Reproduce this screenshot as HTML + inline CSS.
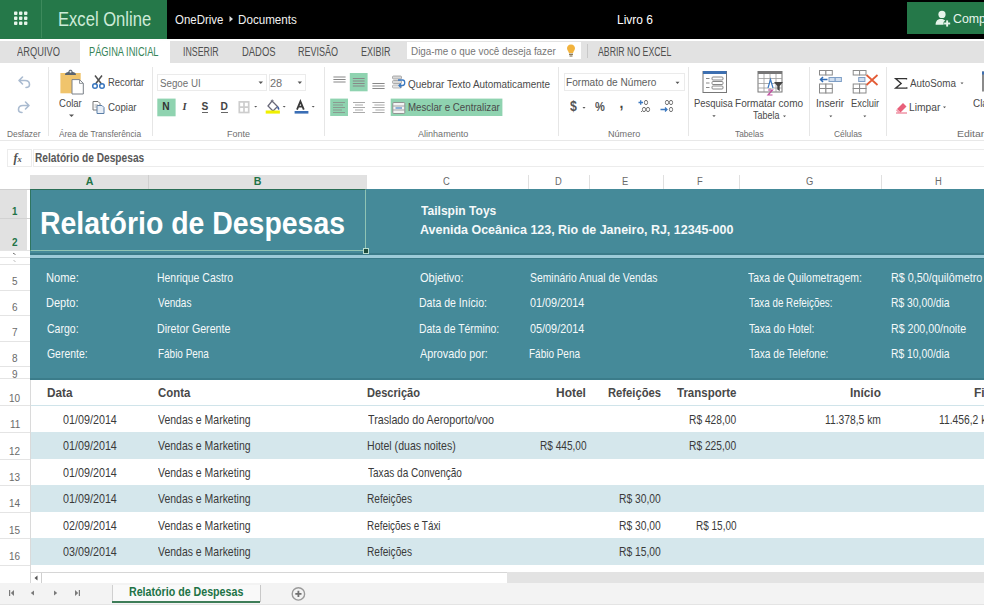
<!DOCTYPE html>
<html><head><meta charset="utf-8">
<style>
*{margin:0;padding:0;box-sizing:border-box}
html,body{width:984px;height:613px;overflow:hidden;background:#fff;font-family:"Liberation Sans",sans-serif;color:#333;position:relative}
.a{position:absolute}
.t{position:absolute;white-space:nowrap;line-height:normal;transform-origin:0 0}
svg{position:absolute;overflow:visible}
</style></head><body>
<!-- top bar -->
<div class="a" style="left:0;top:0;width:984px;height:38.5px;background:#000"></div>
<div class="a" style="left:0;top:0;width:167px;height:38.5px;background:#257849"></div>
<div class="a" style="left:41px;top:0;width:1px;height:38px;background:#3d8a5c"></div>
<div class="a" style="left:907px;top:2px;width:77px;height:32px;background:#257849"></div>
<!-- waffle -->
<svg style="left:0;top:0" width="42" height="38">
  <g fill="#e6f4ea">
   <rect x="14" y="11.5" width="3.4" height="3.4" rx="0.9"/><rect x="19" y="11.5" width="3.4" height="3.4" rx="0.9"/><rect x="24" y="11.5" width="3.4" height="3.4" rx="0.9"/>
   <rect x="14" y="16.5" width="3.4" height="3.4" rx="0.9"/><rect x="19" y="16.5" width="3.4" height="3.4" rx="0.9"/><rect x="24" y="16.5" width="3.4" height="3.4" rx="0.9"/>
   <rect x="14" y="21.5" width="3.4" height="3.4" rx="0.9"/><rect x="19" y="21.5" width="3.4" height="3.4" rx="0.9"/><rect x="24" y="21.5" width="3.4" height="3.4" rx="0.9"/>
  </g>
</svg>
<svg style="left:228px;top:15px" width="6" height="8"><path d="M1.5 1 L5 4 L1.5 7Z" fill="#ddd"/></svg>
<!-- share icon -->
<svg style="left:930px;top:6px" width="24" height="24">
  <g fill="#e6f4ea"><circle cx="12" cy="8.4" r="3.6"/><path d="M5.6 18.8 C5.6 14.6 8 12.9 11 12.9 C13 12.9 14.3 13.5 15.2 14.4 L13.6 16 L13.6 18.8Z"/>
  <rect x="16.2" y="14.4" width="1.9" height="6.2"/><rect x="14.1" y="16.55" width="6.1" height="1.9"/></g>
</svg>
<!-- tabs -->
<div class="a" style="left:0;top:41px;width:984px;height:22.3px;background:#e2e2e2"></div>
<div class="a" style="left:80px;top:41px;width:89.5px;height:23px;background:#fff"></div>
<div class="a" style="left:407px;top:42px;width:174px;height:17px;background:#fff"></div>
<div class="a" style="left:587px;top:44px;width:1px;height:14px;background:#c8c8c8"></div>
<svg style="left:564px;top:42px" width="14" height="18">
  <path d="M7 2.5 C4.3 2.5 3 4.4 3 6.3 C3 8.2 4.6 9.2 4.9 11 L9.1 11 C9.4 9.2 11 8.2 11 6.3 C11 4.4 9.7 2.5 7 2.5Z" fill="#f2b33d"/>
  <rect x="5" y="11.6" width="4" height="1.4" fill="#8a7a5a"/><rect x="5.5" y="13.4" width="3" height="1.2" fill="#8a7a5a"/>
</svg>
<!-- ribbon separators -->
<div class="a" style="left:48px;top:67px;width:1px;height:69px;background:#e6e6e6"></div>
<div class="a" style="left:152px;top:67px;width:1px;height:69px;background:#e6e6e6"></div>
<div class="a" style="left:324px;top:67px;width:1px;height:69px;background:#e6e6e6"></div>
<div class="a" style="left:558px;top:67px;width:1px;height:69px;background:#e6e6e6"></div>
<div class="a" style="left:688px;top:67px;width:1px;height:69px;background:#e6e6e6"></div>
<div class="a" style="left:809px;top:67px;width:1px;height:69px;background:#e6e6e6"></div>
<div class="a" style="left:886px;top:67px;width:1px;height:69px;background:#e6e6e6"></div>
<div class="a" style="left:0;top:140px;width:984px;height:1px;background:#e8e8e8"></div>
<!-- ribbon icons -->
<!-- undo/redo -->
<svg style="left:0;top:62px" width="48" height="60">
  <g fill="none" stroke="#aabbd0" stroke-width="1.6" stroke-linecap="round" stroke-linejoin="round">
    <path d="M19 18.5 L22.5 15 M19 18.5 L22.5 22 M19.5 18.5 H25 C28 18.5 29.5 20.5 29.5 22.5 C29.5 24.5 28 25.5 26 25.5"/>
    <path d="M29 43.5 L25.5 40 M29 43.5 L25.5 47 M28.5 43.5 H23 C20 43.5 18.5 45.5 18.5 47.5 C18.5 49.5 20 50.5 22 50.5"/>
  </g>
</svg>
<!-- clipboard -->
<svg style="left:55px;top:66px" width="35" height="55">
  <rect x="5.4" y="7" width="20.3" height="20.3" fill="#f0c46c"/>
  <path d="M10 9 C10 6.8 11.8 6 13.3 6 C13.6 4.4 14.6 3.8 15.5 3.8 C16.4 3.8 17.4 4.4 17.7 6 C19.2 6 21 6.8 21 9 Z" fill="#5a6470"/><circle cx="15.5" cy="5.8" r="1" fill="#f0f0f0"/>
  <path d="M17 13.6 H24.5 L28.3 17.4 V28 H17 Z" fill="#fff" stroke="#7a8088" stroke-width="1"/>
  <path d="M24.5 13.6 V17.4 H28.3" fill="none" stroke="#7a8088" stroke-width="0.8"/>
  <path d="M14 48.5 L16.5 51 L19 48.5Z" fill="#555"/>
</svg>
<!-- scissors -->
<svg style="left:90px;top:74px" width="18" height="16">
  <g fill="none" stroke-width="1.5">
   <path d="M5 1.5 L11.5 10 M12 1.5 L5.5 10" stroke="#505050"/>
   <circle cx="5" cy="12" r="2.3" stroke="#3b78c0"/><circle cx="12" cy="12" r="2.3" stroke="#3b78c0"/>
  </g>
</svg>
<!-- copy -->
<svg style="left:90px;top:99px" width="18" height="16">
  <path d="M3 2.5 H8 L10 4.5 V11 H3Z" fill="#fff" stroke="#777" stroke-width="1"/>
  <path d="M7 6.5 H12 L14 8.5 V14.5 H7Z" fill="#e8eef6" stroke="#5b7fa8" stroke-width="1"/>
  <path d="M4.5 6 H8 M4.5 8 H7" stroke="#999" stroke-width="0.8"/>
</svg>
<!-- font boxes -->
<div class="a" style="left:157px;top:74px;width:110px;height:17px;border:1px solid #ebebeb"></div>
<div class="a" style="left:269px;top:74px;width:37px;height:17px;border:1px solid #ebebeb"></div>
<svg style="left:150px;top:62px" width="180" height="60">
  <g fill="#555">
   <path d="M108.5 19.5 L113 19.5 L110.75 22Z"/>
   <path d="M147.6 19.5 L152 19.5 L149.8 22Z"/>
  </g>
  <rect x="7.3" y="36.6" width="18.3" height="17.7" fill="#8fd3b0"/>
</svg>
<div class="t" style="left:162.2px;top:101.3px;font-size:10.2px;font-weight:bold;color:#333">N</div>
<div class="t" style="left:182.5px;top:101.3px;font-size:10.5px;font-style:italic;font-weight:bold;font-family:'Liberation Serif',serif;color:#444">I</div>
<div class="t" style="left:201.4px;top:101.3px;font-size:10.2px;font-weight:bold;color:#444">S</div>
<div class="a" style="left:201.5px;top:111.8px;width:6.5px;height:1.1px;background:#666"></div>
<div class="t" style="left:220.5px;top:101.3px;font-size:10.2px;font-weight:bold;color:#444">D</div>
<div class="a" style="left:220.8px;top:111.6px;width:7px;height:1.6px;background:#666"></div>
<svg style="left:236px;top:98px" width="90" height="22">
  <g fill="none" stroke="#cdcdcd" stroke-width="1.7">
   <rect x="3.3" y="3.9" width="9.4" height="10.6"/><path d="M8 3.9 V14.5 M3.3 9.2 H12.7"/>
  </g>
  <g fill="#555"><path d="M18.2 8 L21.2 8 L19.7 9.6Z"/><path d="M46.7 8 L49.7 8 L48.2 9.6Z"/><path d="M75.7 8 L78.7 8 L77.2 9.6Z"/></g>
  <path d="M36 3 L41.5 8.5 L37 13 L32 8Z" fill="#fff" stroke="#6a6a7a" stroke-width="1.3"/>
  <path d="M35 2.8 C35.5 1.8 37 1.8 37.5 3" fill="none" stroke="#6a6a7a" stroke-width="1"/>
  <path d="M41.5 8 C43.3 9 43.8 11 43 12 C41.6 11.8 41 10 41.5 8Z" fill="#3a5aa0"/>
  <rect x="29.7" y="12.5" width="14.2" height="3.1" fill="#f0f000"/>
  <path d="M61 11.7 L64.4 3.3 L67.8 11.7 M62.3 8.6 H66.5" fill="none" stroke="#3a3a3a" stroke-width="1.8"/>
  <rect x="58.6" y="13" width="13.8" height="2.6" fill="#3a6eb5"/>
</svg>
<!-- alignment -->
<svg style="left:324px;top:62px" width="240" height="60">
  <rect x="25.8" y="11" width="17.8" height="18.3" fill="#8fd3b0"/>
  <rect x="6.2" y="36.6" width="17.8" height="17.4" fill="#8fd3b0"/>
  <rect x="66.7" y="36.6" width="111.7" height="17.4" fill="#8fd3b0"/>
  <g stroke="#888" stroke-width="1.1">
    <path d="M9.4 15 H21.6 M9.4 17.5 H21.6 M9.4 20 H21.6"/>
    <path d="M28.8 16.5 H40.6 M28.8 19 H40.6 M28.8 21.5 H40.6 M28.8 24 H40.6"/>
    <path d="M48.4 21.5 H60.6 M48.4 24 H60.6 M48.4 26.5 H60.6"/>
    <path d="M9 40.5 H21 M9 43 H19 M9 45.5 H21 M9 48 H18 M9 50.5 H21" stroke="#8a9a90"/>
    <path d="M29 40.5 H41 M31 43 H39 M29 45.5 H41 M31 48 H39 M29 50.5 H41" stroke="#aaa"/>
    <path d="M48.4 40.5 H60.6 M50.4 43 H60.6 M48.4 45.5 H60.6 M51.4 48 H60.6 M48.4 50.5 H60.6" stroke="#aaa"/>
  </g>
  <g>
    <rect x="68.5" y="14" width="9" height="3" rx="1" fill="#d8d8d8" stroke="#9a9a9a" stroke-width="0.8"/>
    <rect x="68.5" y="18.5" width="9" height="3" rx="1" fill="#d8d8d8" stroke="#9a9a9a" stroke-width="0.8"/>
    <rect x="68.5" y="23" width="9" height="3" rx="1" fill="#e4e4e4" stroke="#a8a8a8" stroke-width="0.8"/>
    <path d="M74 18 H78.5 C81.5 18 81.5 23.5 78.5 23.5 H75" fill="none" stroke="#3b78c0" stroke-width="1.3"/>
    <path d="M77 21.5 L75 23.5 L77 25.5" fill="none" stroke="#3b78c0" stroke-width="1.3"/>
    <rect x="68.8" y="40.5" width="12" height="11" rx="1" fill="#f4f4f4" stroke="#8a8a8a" stroke-width="0.9"/>
    <path d="M68.8 44 H80.8 M68.8 48 H80.8" stroke="#9a9a9a" stroke-width="0.9"/>
    <path d="M71.5 46 H78" stroke="#3b78c0" stroke-width="1.1"/>
  </g>
</svg>
<!-- number -->
<div class="a" style="left:564px;top:73px;width:121px;height:18px;border:1px solid #ebebeb"></div>
<svg style="left:558px;top:62px" width="130" height="60">
  <path d="M117.5 19.8 L121.5 19.8 L119.5 22Z" fill="#555"/>
  <path d="M24.5 45 L27.5 45 L26 46.8Z" fill="#555"/>
</svg>
<div class="t" style="left:570px;top:98px;font-size:14.5px;font-weight:bold;color:#555;transform:scaleX(0.85)">$</div>
<div class="t" style="left:595px;top:99px;font-size:13px;font-weight:bold;color:#555;transform:scaleX(0.85)">%</div>
<div class="t" style="left:619.5px;top:95px;font-size:14px;font-weight:bold;color:#444">,</div>
<svg style="left:636px;top:98px" width="40" height="18">
  <g fill="none" stroke="#666" stroke-width="0.9">
   <ellipse cx="10" cy="4.5" rx="1.6" ry="2.2"/><ellipse cx="8" cy="11.5" rx="1.6" ry="2.2"/><ellipse cx="12" cy="11.5" rx="1.6" ry="2.2"/>
   <path d="M5 13.5 L6 13.5"/>
   <ellipse cx="31" cy="4.5" rx="1.6" ry="2.2"/><ellipse cx="35" cy="4.5" rx="1.6" ry="2.2"/><ellipse cx="35" cy="11.5" rx="1.6" ry="2.2"/>
  </g>
  <path d="M2.5 4.5 H7 M4.7 2.3 V6.7" stroke="#3b78c0" stroke-width="1.3"/>
  <path d="M24.5 11.5 H31 M29 9.5 L31 11.5 L29 13.5" fill="none" stroke="#3b78c0" stroke-width="1.3"/>
</svg>
<!-- tables -->
<svg style="left:700px;top:68px" width="90" height="30">
  <rect x="3" y="3.5" width="23.5" height="21" fill="#fff" stroke="#777" stroke-width="1"/>
  <rect x="3" y="3" width="23.5" height="3" fill="#3d6fb0"/>
  <g stroke="#888" stroke-width="1" fill="none">
    <path d="M6 10.5 H9.5 M6 15 H9.5 M6 19.5 H9.5"/>
    <rect x="12" y="9" width="11" height="3" rx="1"/><rect x="12" y="13.5" width="11" height="3" rx="1"/><rect x="12" y="18" width="11" height="3" rx="1"/>
  </g>
  <rect x="58" y="3.5" width="24" height="20.5" fill="#fff" stroke="#777" stroke-width="1"/>
  <rect x="58" y="3" width="24" height="3" fill="#777"/>
  <g stroke="#999" stroke-width="0.8" fill="none">
    <path d="M58 10.5 H82 M58 15.5 H82 M58 20 H82 M64 6 V24 M70 6 V24 M76 6 V24"/>
  </g>
  <path d="M68 20 L70.5 11.5 L73 20" fill="#fff" stroke="#3b78c0" stroke-width="1.2"/>
  <path d="M68 22 H72.5 L68 27 H72.5" fill="none" stroke="#c050a0" stroke-width="1.2"/>
  <path d="M74 14 H83 L79.7 18 V23 L77.3 21.5 V18Z" fill="#444"/>
</svg>
<svg style="left:690px;top:62px" width="120" height="60">
  <g fill="#555"><path d="M22.3 53.2 L25.7 53.2 L24 55Z"/><path d="M93 53.5 L96 53.5 L94.5 55.3Z"/></g>
</svg>
<!-- cells -->
<svg style="left:805px;top:62px" width="80" height="60">
  <g fill="#fff" stroke="#8a8a8a" stroke-width="1">
   <rect x="14.5" y="8.5" width="6.4" height="4.5"/><rect x="20.9" y="8.5" width="6.4" height="4.5"/>
   <rect x="14.5" y="22" width="6.4" height="4.5"/><rect x="20.9" y="22" width="6.4" height="4.5"/>
   <rect x="14.5" y="26.5" width="6.4" height="4.5"/><rect x="20.9" y="26.5" width="6.4" height="4.5"/>
   <rect x="48.2" y="8.5" width="6.4" height="4.5"/><rect x="54.6" y="8.5" width="6.4" height="4.5"/>
   <rect x="48.2" y="22" width="6.4" height="4.5"/><rect x="54.6" y="22" width="6.4" height="4.5"/>
   <rect x="48.2" y="26.5" width="6.4" height="4.5"/><rect x="54.6" y="26.5" width="6.4" height="4.5"/>
  </g>
  <g fill="#d0deef" stroke="#7f9fc6" stroke-width="1">
   <rect x="24" y="15.5" width="6.2" height="4"/><rect x="30.2" y="15.5" width="6.2" height="4"/>
   <rect x="53.7" y="15.5" width="6.2" height="4"/>
  </g>
  <path d="M15.5 17.5 H22.5 M18 15 L15.5 17.5 L18 20" fill="none" stroke="#2f6bb5" stroke-width="1.5"/>
  <path d="M61.5 13 L72.5 23 M72.5 13 L61.5 23" stroke="#e35b35" stroke-width="1.7"/>
  <g fill="#555"><path d="M24.3 53.5 L27.3 53.5 L25.8 55.3Z"/><path d="M58.3 53.5 L61.3 53.5 L59.8 55.3Z"/></g>
</svg>
<!-- editing -->
<svg style="left:886px;top:62px" width="100" height="60">
  <path d="M20.5 17.5 V16.6 H9.6 L15.2 21.5 L9.6 26.2 H20.8 V25.2" fill="none" stroke="#333" stroke-width="1.3"/>
  <path d="M74.5 20.5 L77.5 20.5 L76 22.3Z" fill="#555"/>
  <path d="M57 44.5 L60 44.5 L58.5 46.3Z" fill="#555"/>
  <path d="M11 47 L17 41 L20.5 44.5 L14.5 50.5 Z" fill="#e8607a"/>
  <path d="M11 47 L14.5 50.5 L12 50.5 L10 48.5Z" fill="#f4a0b0"/>
  <path d="M10 51 H21" stroke="#e8607a" stroke-width="1"/>
  <rect x="96" y="9.5" width="2.5" height="20" fill="#8a8a8a"/><rect x="96" y="9.5" width="3" height="3" fill="#3d6fb0"/>
</svg>

<!-- formula bar -->
<div class="a" style="left:7px;top:149px;width:25px;height:18px;border:1px solid #ececec;background:#fff"></div>
<div class="a" style="left:33px;top:149px;width:951px;height:18px;border:1px solid #ececec;border-right:none;background:#fff"></div>
<div class="t" style="left:13.5px;top:151px;font-family:'Liberation Serif',serif;font-style:italic;font-weight:bold;font-size:12px;color:#505050">f<span style="font-size:8.5px">x</span></div>
<!-- column headers -->
<div class="a" style="left:30px;top:175px;width:336px;height:14px;background:#e1e1e1"></div>
<div class="a" style="left:148px;top:175px;width:1px;height:14px;background:#cfcfcf"></div>
<div class="a" style="left:366px;top:175px;width:1px;height:14px;background:#e0e0e0"></div>
<div class="a" style="left:528px;top:175px;width:1px;height:14px;background:#e0e0e0"></div>
<div class="a" style="left:589px;top:175px;width:1px;height:14px;background:#e0e0e0"></div>
<div class="a" style="left:663px;top:175px;width:1px;height:14px;background:#e0e0e0"></div>
<div class="a" style="left:739px;top:175px;width:1px;height:14px;background:#e0e0e0"></div>
<div class="a" style="left:881px;top:175px;width:1px;height:14px;background:#e0e0e0"></div>
<!-- row header column -->
<div class="a" style="left:0;top:189px;width:27px;height:61px;background:#e1e1e1"></div>
<div class="a" style="left:30px;top:189px;width:1px;height:394px;background:#dadada"></div>
<!-- teal blocks -->
<div class="a" style="left:30px;top:189px;width:954px;height:61px;background:#458a99"></div>
<div class="a" style="left:30px;top:250px;width:954px;height:4px;background:#458a99"></div>
<div class="a" style="left:30px;top:253px;width:954px;height:1.5px;background:#3a7b89"></div>
<div class="a" style="left:30px;top:254.5px;width:954px;height:3px;background:#9ccbd8"></div>
<div class="a" style="left:30px;top:257.5px;width:954px;height:121.5px;background:#458a99"></div>
<div class="a" style="left:30px;top:257.5px;width:954px;height:1.5px;background:#3a7b89"></div>
<div class="a" style="left:30px;top:378px;width:954px;height:1.5px;background:#3b7c8a"></div>
<!-- selection -->
<div class="a" style="left:30px;top:189px;width:336px;height:62px;border:1.2px solid #8fc4b4;border-top:1.5px solid #2b6e57;border-left:1.3px solid #2f7560"></div>
<div class="a" style="left:362.5px;top:247.5px;width:6px;height:6px;background:#1f4d3c;border:1px solid #b8ddd0"></div>
<!-- table header line -->
<div class="a" style="left:31px;top:405px;width:953px;height:1px;background:#d0e4ea"></div>
<!-- bands -->
<div class="a" style="left:31px;top:432px;width:953px;height:27px;background:#d5e7ec"></div>
<div class="a" style="left:31px;top:485px;width:953px;height:27px;background:#d5e7ec"></div>
<div class="a" style="left:31px;top:538px;width:953px;height:27px;background:#d5e7ec"></div>
<!-- row header lines -->
<div class="a" style="left:0;top:218.0px;width:30px;height:1px;background:#d2d2d2"></div>
<div class="a" style="left:0;top:250.0px;width:30px;height:1px;background:#e4e4e4"></div>
<div class="a" style="left:0;top:257.0px;width:30px;height:1px;background:#e4e4e4"></div>
<div class="a" style="left:0;top:264.0px;width:30px;height:1px;background:#e4e4e4"></div>
<div class="a" style="left:0;top:289.5px;width:30px;height:1px;background:#e4e4e4"></div>
<div class="a" style="left:0;top:315.0px;width:30px;height:1px;background:#e4e4e4"></div>
<div class="a" style="left:0;top:340.5px;width:30px;height:1px;background:#e4e4e4"></div>
<div class="a" style="left:0;top:366.0px;width:30px;height:1px;background:#e4e4e4"></div>
<div class="a" style="left:0;top:378.0px;width:30px;height:1px;background:#e4e4e4"></div>
<div class="a" style="left:0;top:405.0px;width:30px;height:1px;background:#e4e4e4"></div>
<div class="a" style="left:0;top:432.0px;width:30px;height:1px;background:#e4e4e4"></div>
<div class="a" style="left:0;top:459.0px;width:30px;height:1px;background:#e4e4e4"></div>
<div class="a" style="left:0;top:485.0px;width:30px;height:1px;background:#e4e4e4"></div>
<div class="a" style="left:0;top:512.0px;width:30px;height:1px;background:#e4e4e4"></div>
<div class="a" style="left:0;top:538.0px;width:30px;height:1px;background:#e4e4e4"></div>
<div class="a" style="left:0;top:565.0px;width:30px;height:1px;background:#e4e4e4"></div>
<div class="a" style="left:0;top:189px;width:30px;height:1px;background:#cfcfcf"></div>
<svg style="left:0;top:250px" width="30" height="15"><path d="M13 3.2 L15.5 4.5 M14 10.5 L15 11.5" stroke="#777" stroke-width="1"/></svg>
<!-- scrollbar -->
<div class="a" style="left:30px;top:572px;width:954px;height:11px;background:#e3e3e3"></div>
<div class="a" style="left:30px;top:572px;width:477px;height:11px;background:#fff;border-top:1px solid #d6d6d6;border-left:1px solid #d6d6d6"></div>
<div class="a" style="left:41px;top:573px;width:1px;height:10px;background:#cfcfcf"></div>
<svg style="left:33px;top:574px" width="6" height="8"><path d="M4.5 1.5 L1.5 4 L4.5 6.5Z" fill="#555"/></svg>
<!-- bottom sheet bar -->
<div class="a" style="left:0;top:583px;width:984px;height:22px;background:#f3f3f3;border-bottom:1px solid #e4e4e4"></div>
<div class="a" style="left:112px;top:585px;width:149px;height:17px;background:#f9f9f9;border-left:1px solid #d0d0d0;border-right:1.5px solid #c8c8c8"></div>
<div class="a" style="left:112px;top:600.5px;width:148px;height:2.2px;background:#3e7d58"></div>
<svg style="left:0;top:583px" width="320" height="21">
  <g fill="#7a7a7a">
   <rect x="9" y="7" width="1.2" height="6"/><path d="M14 7 L10.8 10 L14 13Z"/>
   <path d="M34 7.5 L30.8 10 L34 12.5Z"/>
   <path d="M54 7.5 L57.2 10 L54 12.5Z"/>
   <path d="M75 7 L78.2 10 L75 13Z"/><rect x="78.8" y="7" width="1.2" height="6"/>
  </g>
  <circle cx="298.4" cy="10.9" r="6.2" fill="none" stroke="#9a9a9a" stroke-width="1.4"/>
  <path d="M298.4 7.8 V14 M295.3 10.9 H301.5" stroke="#707070" stroke-width="1.8"/>
</svg>
<!--HEADERS-->
<div class="t" style="left:58.37px;top:8.44px;font-size:19.62px;font-weight:normal;color:#cdebd8;transform:scaleX(0.8463);">Excel Online</div>
<div class="t" style="left:175.04px;top:11.56px;font-size:13.08px;font-weight:normal;color:#f2f2f2;transform:scaleX(0.8755);">OneDrive</div>
<div class="t" style="left:237.67px;top:11.56px;font-size:13.08px;font-weight:normal;color:#f2f2f2;transform:scaleX(0.8899);">Documents</div>
<div class="t" style="left:616.94px;top:11.66px;font-size:13.08px;font-weight:normal;color:#ffffff;transform:scaleX(0.9140);">Livro 6</div>
<div class="t" style="left:953.38px;top:11.43px;font-size:13.23px;font-weight:normal;color:#e8f5ec;transform:scaleX(0.9348);">Compartilhar</div>
<div class="t" style="left:16.50px;top:44.81px;font-size:11.92px;font-weight:normal;color:#505050;transform:scaleX(0.7813);">ARQUIVO</div>
<div class="t" style="left:89.46px;top:44.81px;font-size:11.92px;font-weight:normal;color:#358457;transform:scaleX(0.7780);">PÁGINA INICIAL</div>
<div class="t" style="left:182.61px;top:44.81px;font-size:11.92px;font-weight:normal;color:#505050;transform:scaleX(0.7398);">INSERIR</div>
<div class="t" style="left:241.94px;top:44.81px;font-size:11.92px;font-weight:normal;color:#505050;transform:scaleX(0.7929);">DADOS</div>
<div class="t" style="left:298.28px;top:44.81px;font-size:11.92px;font-weight:normal;color:#505050;transform:scaleX(0.7578);">REVISÃO</div>
<div class="t" style="left:360.88px;top:44.81px;font-size:11.92px;font-weight:normal;color:#505050;transform:scaleX(0.7548);">EXIBIR</div>
<div class="t" style="left:410.81px;top:45.00px;font-size:11.05px;font-weight:normal;color:#767676;transform:scaleX(0.8933);">Diga-me o que você deseja fazer</div>
<div class="t" style="left:597.60px;top:44.81px;font-size:11.92px;font-weight:normal;color:#505050;transform:scaleX(0.7332);">ABRIR NO EXCEL</div>
<div class="t" style="left:7.13px;top:128.32px;font-size:9.59px;font-weight:normal;color:#6e6e6e;transform:scaleX(0.8721);">Desfazer</div>
<div class="t" style="left:59.00px;top:128.32px;font-size:9.59px;font-weight:normal;color:#6e6e6e;transform:scaleX(0.8711);">Área de Transferência</div>
<div class="t" style="left:226.98px;top:128.32px;font-size:9.59px;font-weight:normal;color:#6e6e6e;transform:scaleX(0.9395);">Fonte</div>
<div class="t" style="left:417.60px;top:128.32px;font-size:9.59px;font-weight:normal;color:#6e6e6e;transform:scaleX(0.9437);">Alinhamento</div>
<div class="t" style="left:607.97px;top:128.32px;font-size:9.59px;font-weight:normal;color:#6e6e6e;transform:scaleX(0.9483);">Número</div>
<div class="t" style="left:735.13px;top:128.32px;font-size:9.59px;font-weight:normal;color:#6e6e6e;transform:scaleX(0.8654);">Tabelas</div>
<div class="t" style="left:833.58px;top:128.32px;font-size:9.59px;font-weight:normal;color:#6e6e6e;transform:scaleX(0.8775);">Células</div>
<div class="t" style="left:956.96px;top:128.32px;font-size:9.59px;font-weight:normal;color:#6e6e6e;transform:scaleX(1.0882);">Editando</div>
<div class="t" style="left:58.62px;top:97.66px;font-size:10.32px;font-weight:normal;color:#4a4a4a;transform:scaleX(0.9246);">Colar</div>
<div class="t" style="left:107.95px;top:77.16px;font-size:10.32px;font-weight:normal;color:#4a4a4a;transform:scaleX(0.9142);">Recortar</div>
<div class="t" style="left:107.51px;top:101.66px;font-size:10.32px;font-weight:normal;color:#4a4a4a;transform:scaleX(0.9412);">Copiar</div>
<div class="t" style="left:159.61px;top:77.20px;font-size:11.05px;font-weight:normal;color:#707070;transform:scaleX(0.8825);">Segoe UI</div>
<div class="t" style="left:270.15px;top:77.20px;font-size:11.05px;font-weight:normal;color:#707070;transform:scaleX(0.9969);">28</div>
<div class="t" style="left:407.90px;top:77.66px;font-size:10.76px;font-weight:normal;color:#4a4a4a;transform:scaleX(0.9232);">Quebrar Texto Automaticamente</div>
<div class="t" style="left:407.52px;top:101.46px;font-size:10.76px;font-weight:normal;color:#4a4a4a;transform:scaleX(0.9044);">Mesclar e Centralizar</div>
<div class="t" style="left:565.99px;top:77.23px;font-size:10.47px;font-weight:normal;color:#606060;transform:scaleX(0.9651);">Formato de Número</div>
<div class="t" style="left:694.15px;top:98.23px;font-size:10.47px;font-weight:normal;color:#4a4a4a;transform:scaleX(0.9017);">Pesquisa</div>
<div class="t" style="left:735.20px;top:98.23px;font-size:10.47px;font-weight:normal;color:#4a4a4a;transform:scaleX(0.9608);">Formatar como</div>
<div class="t" style="left:752.62px;top:109.83px;font-size:10.47px;font-weight:normal;color:#4a4a4a;transform:scaleX(0.8543);">Tabela</div>
<div class="t" style="left:815.88px;top:98.03px;font-size:10.47px;font-weight:normal;color:#4a4a4a;transform:scaleX(0.9715);">Inserir</div>
<div class="t" style="left:850.65px;top:98.03px;font-size:10.47px;font-weight:normal;color:#4a4a4a;transform:scaleX(0.8972);">Excluir</div>
<div class="t" style="left:910.00px;top:77.73px;font-size:10.47px;font-weight:normal;color:#4a4a4a;transform:scaleX(0.9406);">AutoSoma</div>
<div class="t" style="left:909.18px;top:102.03px;font-size:10.47px;font-weight:normal;color:#4a4a4a;transform:scaleX(0.9834);">Limpar</div>
<div class="t" style="left:972.51px;top:98.03px;font-size:10.47px;font-weight:normal;color:#4a4a4a;transform:scaleX(0.9453);">Classificar</div>
<div class="t" style="left:34.99px;top:151.08px;font-size:12.06px;font-weight:bold;color:#585858;transform:scaleX(0.8452);">Relatório de Despesas</div>
<div class="t" style="left:40.39px;top:204.51px;font-size:31.69px;font-weight:bold;color:#ffffff;transform:scaleX(0.8975);">Relatório de Despesas</div>
<div class="t" style="left:420.58px;top:202.73px;font-size:13.66px;font-weight:bold;color:#f5f9fa;transform:scaleX(0.8836);">Tailspin Toys</div>
<div class="t" style="left:420.45px;top:221.63px;font-size:13.23px;font-weight:bold;color:#f5f9fa;transform:scaleX(0.9430);">Avenida Oceânica 123, Rio de Janeiro, RJ, 12345-000</div>
<div class="t" style="left:46.41px;top:271.01px;font-size:11.92px;font-weight:normal;color:#f5f9fa;transform:scaleX(0.9364);">Nome:</div>
<div class="t" style="left:157.46px;top:271.01px;font-size:11.92px;font-weight:normal;color:#f5f9fa;transform:scaleX(0.8782);">Henrique Castro</div>
<div class="t" style="left:419.86px;top:271.01px;font-size:11.92px;font-weight:normal;color:#f5f9fa;transform:scaleX(0.9272);">Objetivo:</div>
<div class="t" style="left:529.78px;top:271.01px;font-size:11.92px;font-weight:normal;color:#f5f9fa;transform:scaleX(0.8710);">Seminário Anual de Vendas</div>
<div class="t" style="left:748.49px;top:271.01px;font-size:11.92px;font-weight:normal;color:#f5f9fa;transform:scaleX(0.8774);">Taxa de Quilometragem:</div>
<div class="t" style="left:890.84px;top:271.01px;font-size:11.92px;font-weight:normal;color:#f5f9fa;transform:scaleX(0.9072);">R$ 0,50/quilômetro</div>
<div class="t" style="left:46.42px;top:296.41px;font-size:11.92px;font-weight:normal;color:#f5f9fa;transform:scaleX(0.9270);">Depto:</div>
<div class="t" style="left:158.30px;top:296.41px;font-size:11.92px;font-weight:normal;color:#f5f9fa;transform:scaleX(0.8425);">Vendas</div>
<div class="t" style="left:419.46px;top:296.41px;font-size:11.92px;font-weight:normal;color:#f5f9fa;transform:scaleX(0.8857);">Data de Início:</div>
<div class="t" style="left:529.87px;top:296.41px;font-size:11.92px;font-weight:normal;color:#f5f9fa;transform:scaleX(0.9104);">01/09/2014</div>
<div class="t" style="left:748.50px;top:296.41px;font-size:11.92px;font-weight:normal;color:#f5f9fa;transform:scaleX(0.8243);">Taxa de Refeições:</div>
<div class="t" style="left:890.87px;top:296.41px;font-size:11.92px;font-weight:normal;color:#f5f9fa;transform:scaleX(0.8668);">R$ 30,00/dia</div>
<div class="t" style="left:46.77px;top:321.81px;font-size:11.92px;font-weight:normal;color:#f5f9fa;transform:scaleX(0.8848);">Cargo:</div>
<div class="t" style="left:157.45px;top:321.81px;font-size:11.92px;font-weight:normal;color:#f5f9fa;transform:scaleX(0.8941);">Diretor Gerente</div>
<div class="t" style="left:419.47px;top:321.81px;font-size:11.92px;font-weight:normal;color:#f5f9fa;transform:scaleX(0.8737);">Data de Término:</div>
<div class="t" style="left:529.87px;top:321.81px;font-size:11.92px;font-weight:normal;color:#f5f9fa;transform:scaleX(0.9104);">05/09/2014</div>
<div class="t" style="left:748.50px;top:321.81px;font-size:11.92px;font-weight:normal;color:#f5f9fa;transform:scaleX(0.8597);">Taxa do Hotel:</div>
<div class="t" style="left:890.85px;top:321.81px;font-size:11.92px;font-weight:normal;color:#f5f9fa;transform:scaleX(0.8928);">R$ 200,00/noite</div>
<div class="t" style="left:46.78px;top:347.21px;font-size:11.92px;font-weight:normal;color:#f5f9fa;transform:scaleX(0.8763);">Gerente:</div>
<div class="t" style="left:157.50px;top:347.21px;font-size:11.92px;font-weight:normal;color:#f5f9fa;transform:scaleX(0.8359);">Fábio Pena</div>
<div class="t" style="left:420.30px;top:347.21px;font-size:11.92px;font-weight:normal;color:#f5f9fa;transform:scaleX(0.9062);">Aprovado por:</div>
<div class="t" style="left:529.40px;top:347.21px;font-size:11.92px;font-weight:normal;color:#f5f9fa;transform:scaleX(0.8376);">Fábio Pena</div>
<div class="t" style="left:748.50px;top:347.21px;font-size:11.92px;font-weight:normal;color:#f5f9fa;transform:scaleX(0.8530);">Taxa de Telefone:</div>
<div class="t" style="left:890.87px;top:347.21px;font-size:11.92px;font-weight:normal;color:#f5f9fa;transform:scaleX(0.8668);">R$ 10,00/dia</div>
<div class="t" style="left:46.99px;top:386.11px;font-size:11.92px;font-weight:bold;color:#484848;transform:scaleX(0.9888);">Data</div>
<div class="t" style="left:157.54px;top:386.11px;font-size:11.92px;font-weight:bold;color:#484848;transform:scaleX(0.9565);">Conta</div>
<div class="t" style="left:367.43px;top:386.11px;font-size:11.92px;font-weight:bold;color:#484848;transform:scaleX(0.9321);">Descrição</div>
<div class="t" style="left:556.48px;top:386.11px;font-size:11.92px;font-weight:bold;color:#484848;transform:scaleX(1.0045);">Hotel</div>
<div class="t" style="left:608.13px;top:386.11px;font-size:11.92px;font-weight:bold;color:#484848;transform:scaleX(0.9426);">Refeições</div>
<div class="t" style="left:676.89px;top:386.11px;font-size:11.92px;font-weight:bold;color:#484848;transform:scaleX(0.9646);">Transporte</div>
<div class="t" style="left:849.59px;top:386.11px;font-size:11.92px;font-weight:bold;color:#484848;transform:scaleX(0.9920);">Início</div>
<div class="t" style="left:973.58px;top:386.11px;font-size:11.92px;font-weight:bold;color:#484848;transform:scaleX(1.0117);">Fim</div>
<div class="t" style="left:62.68px;top:412.91px;font-size:11.92px;font-weight:normal;color:#3a3a3a;transform:scaleX(0.9037);">01/09/2014</div>
<div class="t" style="left:158.00px;top:412.91px;font-size:11.92px;font-weight:normal;color:#3a3a3a;transform:scaleX(0.8798);">Vendas e Marketing</div>
<div class="t" style="left:367.89px;top:412.91px;font-size:11.92px;font-weight:normal;color:#3a3a3a;transform:scaleX(0.8999);">Traslado do Aeroporto/voo</div>
<div class="t" style="left:689.18px;top:412.91px;font-size:11.92px;font-weight:normal;color:#3a3a3a;transform:scaleX(0.8579);">R$ 428,00</div>
<div class="t" style="left:62.68px;top:439.41px;font-size:11.92px;font-weight:normal;color:#3a3a3a;transform:scaleX(0.9037);">01/09/2014</div>
<div class="t" style="left:158.00px;top:439.41px;font-size:11.92px;font-weight:normal;color:#3a3a3a;transform:scaleX(0.8798);">Vendas e Marketing</div>
<div class="t" style="left:367.25px;top:439.41px;font-size:11.92px;font-weight:normal;color:#3a3a3a;transform:scaleX(0.8878);">Hotel (duas noites)</div>
<div class="t" style="left:540.19px;top:439.41px;font-size:11.92px;font-weight:normal;color:#3a3a3a;transform:scaleX(0.8467);">R$ 445,00</div>
<div class="t" style="left:689.18px;top:439.41px;font-size:11.92px;font-weight:normal;color:#3a3a3a;transform:scaleX(0.8579);">R$ 225,00</div>
<div class="t" style="left:62.68px;top:465.81px;font-size:11.92px;font-weight:normal;color:#3a3a3a;transform:scaleX(0.9037);">01/09/2014</div>
<div class="t" style="left:158.00px;top:465.81px;font-size:11.92px;font-weight:normal;color:#3a3a3a;transform:scaleX(0.8798);">Vendas e Marketing</div>
<div class="t" style="left:367.90px;top:465.81px;font-size:11.92px;font-weight:normal;color:#3a3a3a;transform:scaleX(0.8450);">Taxas da Convenção</div>
<div class="t" style="left:62.68px;top:492.21px;font-size:11.92px;font-weight:normal;color:#3a3a3a;transform:scaleX(0.9037);">01/09/2014</div>
<div class="t" style="left:158.00px;top:492.21px;font-size:11.92px;font-weight:normal;color:#3a3a3a;transform:scaleX(0.8798);">Vendas e Marketing</div>
<div class="t" style="left:367.29px;top:492.21px;font-size:11.92px;font-weight:normal;color:#3a3a3a;transform:scaleX(0.8493);">Refeições</div>
<div class="t" style="left:619.38px;top:492.21px;font-size:11.92px;font-weight:normal;color:#3a3a3a;transform:scaleX(0.8640);">R$ 30,00</div>
<div class="t" style="left:62.68px;top:518.61px;font-size:11.92px;font-weight:normal;color:#3a3a3a;transform:scaleX(0.9037);">02/09/2014</div>
<div class="t" style="left:158.00px;top:518.61px;font-size:11.92px;font-weight:normal;color:#3a3a3a;transform:scaleX(0.8798);">Vendas e Marketing</div>
<div class="t" style="left:367.31px;top:518.61px;font-size:11.92px;font-weight:normal;color:#3a3a3a;transform:scaleX(0.8315);">Refeições e Táxi</div>
<div class="t" style="left:619.38px;top:518.61px;font-size:11.92px;font-weight:normal;color:#3a3a3a;transform:scaleX(0.8640);">R$ 30,00</div>
<div class="t" style="left:695.80px;top:518.61px;font-size:11.92px;font-weight:normal;color:#3a3a3a;transform:scaleX(0.8385);">R$ 15,00</div>
<div class="t" style="left:62.68px;top:545.01px;font-size:11.92px;font-weight:normal;color:#3a3a3a;transform:scaleX(0.9037);">03/09/2014</div>
<div class="t" style="left:158.00px;top:545.01px;font-size:11.92px;font-weight:normal;color:#3a3a3a;transform:scaleX(0.8798);">Vendas e Marketing</div>
<div class="t" style="left:367.29px;top:545.01px;font-size:11.92px;font-weight:normal;color:#3a3a3a;transform:scaleX(0.8493);">Refeições</div>
<div class="t" style="left:619.38px;top:545.01px;font-size:11.92px;font-weight:normal;color:#3a3a3a;transform:scaleX(0.8640);">R$ 15,00</div>
<div class="t" style="left:824.78px;top:412.91px;font-size:11.92px;font-weight:normal;color:#3a3a3a;transform:scaleX(0.8650);">11.378,5 km</div>
<div class="t" style="left:938.88px;top:412.91px;font-size:11.92px;font-weight:normal;color:#3a3a3a;transform:scaleX(0.8650);">11.456,2 km</div>
<div class="t" style="left:129.36px;top:585.28px;font-size:12.50px;font-weight:bold;color:#217346;transform:scaleX(0.8526);">Relatório de Despesas</div>
<div class="t" style="left:85.78px;top:175.49px;font-size:10.61px;font-weight:bold;color:#217346;transform:scaleX(1.0000);">A</div>
<div class="t" style="left:253.87px;top:175.49px;font-size:10.61px;font-weight:bold;color:#217346;transform:scaleX(1.0000);">B</div>
<div class="t" style="left:443.23px;top:175.00px;font-size:11.05px;font-weight:normal;color:#6a6a6a;transform:scaleX(0.8500);">C</div>
<div class="t" style="left:554.53px;top:175.00px;font-size:11.05px;font-weight:normal;color:#6a6a6a;transform:scaleX(0.8500);">D</div>
<div class="t" style="left:622.37px;top:175.00px;font-size:11.05px;font-weight:normal;color:#6a6a6a;transform:scaleX(0.8500);">E</div>
<div class="t" style="left:697.20px;top:175.00px;font-size:11.05px;font-weight:normal;color:#6a6a6a;transform:scaleX(0.8500);">F</div>
<div class="t" style="left:806.33px;top:175.00px;font-size:11.05px;font-weight:normal;color:#6a6a6a;transform:scaleX(0.8500);">G</div>
<div class="t" style="left:935.47px;top:175.00px;font-size:11.05px;font-weight:normal;color:#6a6a6a;transform:scaleX(0.8500);">H</div>
<div class="t" style="left:11.64px;top:204.66px;font-size:10.76px;font-weight:bold;color:#217346;transform:scaleX(0.9000);">1</div>
<div class="t" style="left:11.57px;top:236.30px;font-size:11.05px;font-weight:bold;color:#217346;transform:scaleX(0.9000);">2</div>
<div class="t" style="left:12.01px;top:275.44px;font-size:11.34px;font-weight:normal;color:#6a6a6a;transform:scaleX(0.8800);">5</div>
<div class="t" style="left:11.96px;top:300.74px;font-size:11.34px;font-weight:normal;color:#6a6a6a;transform:scaleX(0.8800);">6</div>
<div class="t" style="left:12.01px;top:326.34px;font-size:11.34px;font-weight:normal;color:#6a6a6a;transform:scaleX(0.8800);">7</div>
<div class="t" style="left:12.01px;top:352.44px;font-size:11.34px;font-weight:normal;color:#6a6a6a;transform:scaleX(0.8800);">8</div>
<div class="t" style="left:12.06px;top:367.64px;font-size:11.34px;font-weight:normal;color:#6a6a6a;transform:scaleX(0.8800);">9</div>
<div class="t" style="left:9.08px;top:391.54px;font-size:11.34px;font-weight:normal;color:#6a6a6a;transform:scaleX(0.8800);">10</div>
<div class="t" style="left:9.50px;top:417.74px;font-size:11.34px;font-weight:normal;color:#6a6a6a;transform:scaleX(0.8800);">11</div>
<div class="t" style="left:9.13px;top:444.54px;font-size:11.34px;font-weight:normal;color:#6a6a6a;transform:scaleX(0.8800);">12</div>
<div class="t" style="left:9.08px;top:470.74px;font-size:11.34px;font-weight:normal;color:#6a6a6a;transform:scaleX(0.8800);">13</div>
<div class="t" style="left:9.03px;top:497.44px;font-size:11.34px;font-weight:normal;color:#6a6a6a;transform:scaleX(0.8800);">14</div>
<div class="t" style="left:9.08px;top:524.34px;font-size:11.34px;font-weight:normal;color:#6a6a6a;transform:scaleX(0.8800);">15</div>
<div class="t" style="left:9.08px;top:550.44px;font-size:11.34px;font-weight:normal;color:#6a6a6a;transform:scaleX(0.8800);">16</div>
</body></html>
